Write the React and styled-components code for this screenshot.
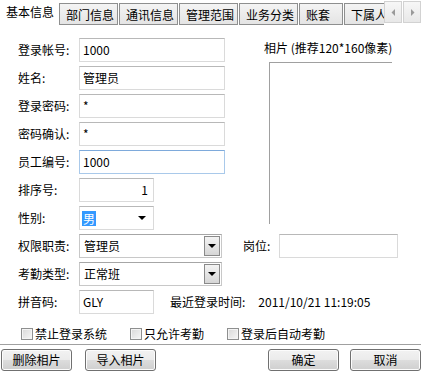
import React from 'react'
import styled, { createGlobalStyle } from 'styled-components'

const Global = createGlobalStyle`
  body { margin:0; background:#fff; }
`

const Window = styled.div`
  width:421px;
  height:375px;
  overflow:hidden;
  background:#fff;
  display:flex;
  flex-direction:column;
  font-family:"Noto Sans CJK SC", "Microsoft YaHei", sans-serif;
  font-size:12px;
  line-height:16px;
  color:#000;
`

const TabBar = styled.div`
  display:flex;
  align-items:flex-start;
  height:25px;
  flex:none;
`
const TabList = styled.div`
  flex:1;
  display:flex;
  align-items:flex-end;
  height:25px;
  overflow:hidden;
`
const ActiveTab = styled.div`
  flex:none;
  height:24px;
  line-height:22px;
  padding:0 5px 0 6px;
  white-space:nowrap;
`
const Tab = styled.div`
  flex:none;
  box-sizing:border-box;
  width:${p => p.$w || 59}px;
  height:22px;
  margin-right:1px;
  padding-left:6px;
  line-height:21px;
  white-space:nowrap;
  overflow:hidden;
  border:1px solid #8e8f8f;
  background:linear-gradient(#f4f4f4, #e4e4e4);
`
const Scroller = styled.div`
  display:flex;
  gap:1px;
  padding-top:1px;
`
const ScrollBtn = styled.div`
  width:18px;
  height:22px;
  box-sizing:border-box;
  border:1px solid #d2d2d2;
  background:linear-gradient(#f7f7f7, #e8e8e8);
  display:flex;
  align-items:center;
  justify-content:center;
`

const Body = styled.div`
  display:flex;
  flex-direction:column;
  gap:4px;
  padding:13px 0 0 18px;
`
const Upper = styled.div`
  display:flex;
`
const FormCol = styled.div`
  display:flex;
  flex-direction:column;
  gap:4px;
`
const Row = styled.div`
  display:flex;
  align-items:center;
  height:24px;
`
const Label = styled.span`
  flex:none;
  width:${p => p.$w || 61}px;
  margin-left:${p => p.$ml || 0}px;
  white-space:nowrap;
`
const TextBox = styled.div`
  flex:none;
  box-sizing:border-box;
  width:${p => p.$w}px;
  height:24px;
  padding:0 ${p => (p.$right ? 5 : 3)}px 0 3px;
  border:1px solid ${p => (p.$focus ? '#a9c9ea' : '#dadada')};
  border-top-color:${p => (p.$focus ? '#7eaadb' : '#b8b8b8')};
  display:flex;
  align-items:center;
  justify-content:${p => (p.$right ? 'flex-end' : 'flex-start')};
  white-space:nowrap;
`
const Select = styled(TextBox)`
  justify-content:space-between;
  padding:0 7px 0 2px;
`
const Picked = styled.span`
  background:#3399ff;
  color:#fff;
  line-height:15px;
  padding:0 1px;
`
const Combo = styled(TextBox)`
  justify-content:space-between;
  padding:1px;
  border-color:#c8c8c8;
  border-top-color:#a6a6a6;
`
const ComboText = styled.span`
  padding-left:3px;
`
const DropBtn = styled.div`
  width:16px;
  height:20px;
  box-sizing:border-box;
  border:1px solid #8a8a8a;
  background:linear-gradient(#f3f3f3, #d6d6d6);
  display:flex;
  align-items:center;
  justify-content:center;
`
const Arrow = styled.span`
  width:0;
  height:0;
  border-left:4px solid transparent;
  border-right:4px solid transparent;
  border-top:4px solid #000;
`

const PhotoCol = styled.div`
  margin-left:39px;
  padding-top:2px;
  display:flex;
  flex-direction:column;
`
const PhotoBox = styled.div`
  margin:6px 0 0 5px;
  width:122px;
  height:161px;
  border-top:1px solid #a0a0a0;
  border-left:1px solid #a0a0a0;
`

const Plain = styled.span`
  margin-left:${p => p.$ml || 0}px;
  white-space:nowrap;
`

const Checks = styled.div`
  display:flex;
  align-items:center;
  gap:23px;
  margin:12px 0 0 21px;
`
const Check = styled.label`
  display:flex;
  align-items:center;
  gap:2px;
  white-space:nowrap;
`
const Box = styled.span`
  width:12px;
  height:12px;
  box-sizing:border-box;
  border:1px solid #8e8f8f;
  background:linear-gradient(135deg, #d8d8d8, #f6f6f6);
  box-shadow:inset 0 0 0 1px #f4f4f4;
`

const Footer = styled.div`
  margin-top:auto;
  border-top:1px solid #a0a0a0;
  padding:4px 0 4px 1px;
  display:flex;
`
const Group = styled.div`
  display:flex;
  gap:${p => p.$gap}px;
  margin-left:${p => (p.$right ? 'auto' : '0')};
`
const Button = styled.div`
  width:71px;
  height:22px;
  box-sizing:border-box;
  border:1px solid #707070;
  border-radius:3px;
  background:linear-gradient(#f2f2f2 0%, #ebebeb 50%, #dddddd 51%, #cfcfcf 100%);
  box-shadow:inset 0 0 0 1px #fcfcfc;
  display:flex;
  align-items:center;
  justify-content:center;
`

function ScrollArrow({ dir }) {
  return (
    <svg width="5" height="7" viewBox="0 0 5 7">
      {dir === 'left'
        ? <path d="M4 0L0.5 3.5L4 7Z" fill="#9a9a9a" />
        : <path d="M1 0L4.5 3.5L1 7Z" fill="#9a9a9a" />}
    </svg>
  )
}

export default function App() {
  return (
    <Window>
      <Global />
      <TabBar>
        <TabList>
          <ActiveTab>基本信息</ActiveTab>
          <Tab>部门信息</Tab>
          <Tab>通讯信息</Tab>
          <Tab>管理范围</Tab>
          <Tab>业务分类</Tab>
          <Tab $w={44}>账套</Tab>
          <Tab $w={60}>下属人员</Tab>
        </TabList>
        <Scroller>
          <ScrollBtn><ScrollArrow dir="left" /></ScrollBtn>
          <ScrollBtn><ScrollArrow dir="right" /></ScrollBtn>
        </Scroller>
      </TabBar>

      <Body>
        <Upper>
          <FormCol>
            <Row><Label>登录帐号:</Label><TextBox $w={146}>1000</TextBox></Row>
            <Row><Label>姓名:</Label><TextBox $w={146}>管理员</TextBox></Row>
            <Row><Label>登录密码:</Label><TextBox $w={146}>*</TextBox></Row>
            <Row><Label>密码确认:</Label><TextBox $w={146}>*</TextBox></Row>
            <Row><Label>员工编号:</Label><TextBox $w={146} $focus>1000</TextBox></Row>
            <Row><Label>排序号:</Label><TextBox $w={75} $right>1</TextBox></Row>
            <Row>
              <Label>性别:</Label>
              <Select $w={75}><Picked>男</Picked><Arrow /></Select>
            </Row>
          </FormCol>
          <PhotoCol>
            <Plain>相片 (推荐120*160像素)</Plain>
            <PhotoBox />
          </PhotoCol>
        </Upper>
        <Row>
          <Label>权限职责:</Label>
          <Combo $w={143}><ComboText>管理员</ComboText><DropBtn><Arrow /></DropBtn></Combo>
          <Label $w={36} $ml={21}>岗位:</Label>
          <TextBox $w={119} />
        </Row>
        <Row>
          <Label>考勤类型:</Label>
          <Combo $w={143}><ComboText>正常班</ComboText><DropBtn><Arrow /></DropBtn></Combo>
        </Row>
        <Row>
          <Label>拼音码:</Label>
          <TextBox $w={75}>GLY</TextBox>
          <Plain $ml={16}>最近登录时间:</Plain>
          <Plain $ml={13}>2011/10/21 11:19:05</Plain>
        </Row>
      </Body>

      <Checks>
        <Check><Box />禁止登录系统</Check>
        <Check><Box />只允许考勤</Check>
        <Check><Box />登录后自动考勤</Check>
      </Checks>

      <Footer>
        <Group $gap={13}>
          <Button>删除相片</Button>
          <Button>导入相片</Button>
        </Group>
        <Group $gap={11} $right>
          <Button>确定</Button>
          <Button>取消</Button>
        </Group>
      </Footer>
    </Window>
  )
}
